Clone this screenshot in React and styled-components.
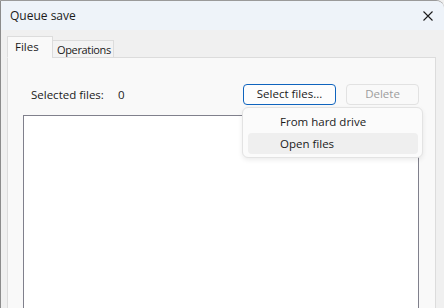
import React, { useState } from "react"
import styled, { createGlobalStyle } from "styled-components"

const GlobalStyle = createGlobalStyle`
  html, body {
    margin: 0;
    padding: 0;
    background: #f0f0f0;
  }
  #root {
    width: 444px;
    height: 308px;
    overflow: hidden;
  }
`

const font = `"Open Sans", "Noto Sans", sans-serif`

const Window = styled.div`
  display: flex;
  flex-direction: column;
  width: 444px;
  height: 308px;
  box-sizing: border-box;
  border-left: 1px solid #8c8c8c;
  border-top: 1px solid #9a9a9a;
  border-top-right-radius: 8px;
  background: #f0f0f0;
  overflow: hidden;
  font-family: ${font};
  font-size: 11.5px;
  color: #1a1a1a;
`
const TitleBar = styled.div`
  display: flex;
  align-items: center;
  justify-content: space-between;
  height: 29px;
  padding: 0 10px 0 9px;
  background: #eef3f9;
  font-size: 12px;
  color: #1b1b1b;
`
const CloseButton = styled.div`
  display: flex;
  align-items: center;
  justify-content: center;
  width: 12px;
  height: 12px;
  svg {
    width: 10px;
    height: 10px;
    stroke: #1b1b1b;
    stroke-width: 1.1;
  }
`
const Body = styled.div`
  flex: 1;
  display: flex;
  flex-direction: column;
  padding: 7px 8px 0 6px;
  min-height: 0;
`
const TabStrip = styled.div`
  display: flex;
  align-items: flex-end;
  height: 21px;
  position: relative;
  z-index: 1;
  margin-bottom: -1px;
`
const Tab = styled.div`
  box-sizing: border-box;
  display: flex;
  align-items: center;
  width: ${(p) => p.w}px;
  height: ${(p) => (p.active ? "22px" : "18px")};
  padding: ${(p) => (p.active ? "0 0 2px 7px" : "0 0 0 4px")};
  background: ${(p) => (p.active ? "#f9f9f9" : "#f3f3f3")};
  border: 1px solid #dcdcdc;
  border-bottom: ${(p) => (p.active ? "1px solid #f9f9f9" : "1px solid #dcdcdc")};
  margin-left: ${(p) => (p.active ? "0" : "-1px")};
  font-size: ${(p) => (p.active ? "11.5px" : "11px")};
  letter-spacing: ${(p) => (p.active ? "0" : "-0.35px")};
  white-space: nowrap;
`
const Panel = styled.div`
  flex: 1;
  display: flex;
  flex-direction: column;
  background: #f9f9f9;
  border: 1px solid #dcdcdc;
  border-bottom: none;
  padding: 26px 16px 0 15px;
  min-height: 0;
`
const Toolbar = styled.div`
  display: flex;
  align-items: center;
  height: 20px;
  margin-bottom: 11px;
`
const Label = styled.span`
  margin-left: 8px;
  width: 87px;
`
const Count = styled.span`
  flex: 1;
`
const MenuAnchor = styled.div`
  position: relative;
`
const Button = styled.button`
  box-sizing: border-box;
  height: 21px;
  width: ${(p) => p.w}px;
  margin-left: ${(p) => p.gap || 0}px;
  padding: 0 0 1px;
  font-family: ${font};
  font-size: 11.5px;
  border-radius: 4px;
  border: 1px solid ${(p) => (p.primary ? "#0f64be" : "#e2e2e2")};
  background: ${(p) => (p.disabled ? "#f9f9f9" : "#fdfdfd")};
  color: ${(p) => (p.disabled ? "#9d9d9d" : "#1a1a1a")};
`
const Menu = styled.div`
  position: absolute;
  top: 23px;
  left: -1px;
  z-index: 2;
  box-sizing: border-box;
  width: 181px;
  padding: 3px 4px 3px 5px;
  background: #fbfbfb;
  border: 1px solid #e3e3e3;
  border-radius: 6px;
  box-shadow: 0 2px 5px rgba(0, 0, 0, 0.08);
`
const MenuItem = styled.div`
  height: 21px;
  display: flex;
  align-items: center;
  padding-left: 32px;
  border-radius: 4px;
  background: ${(p) => (p.hot ? "#efefef" : "transparent")};
  & + & {
    margin-top: 1px;
  }
`
const ListBox = styled.div`
  flex: 1;
  background: #ffffff;
  border: 1px solid #80808c;
  border-bottom: none;
`

const App = () => {
  const [tab, setTab] = useState("files")
  const menuItems = ["From hard drive", "Open files"]

  return (
    <>
      <GlobalStyle />
      <Window>
        <TitleBar>
          <span>Queue save</span>
          <CloseButton>
            <svg viewBox="0 0 10 10" fill="none">
              <path d="M0.5 0.5L9.5 9.5M9.5 0.5L0.5 9.5" />
            </svg>
          </CloseButton>
        </TitleBar>
        <Body>
          <TabStrip>
            <Tab w={46} active={tab === "files"} onClick={() => setTab("files")}>
              Files
            </Tab>
            <Tab w={62} active={tab === "ops"} onClick={() => setTab("ops")}>
              Operations
            </Tab>
          </TabStrip>
          <Panel>
            <Toolbar>
              <Label>Selected files:</Label>
              <Count>0</Count>
              <MenuAnchor>
                <Button primary w={93}>
                  Select files...
                </Button>
                <Menu>
                  {menuItems.map((item, i) => (
                    <MenuItem key={item} hot={i === 1}>
                      {item}
                    </MenuItem>
                  ))}
                </Menu>
              </MenuAnchor>
              <Button disabled w={73} gap={10}>
                Delete
              </Button>
            </Toolbar>
            <ListBox />
          </Panel>
        </Body>
      </Window>
    </>
  )
}

export default App
